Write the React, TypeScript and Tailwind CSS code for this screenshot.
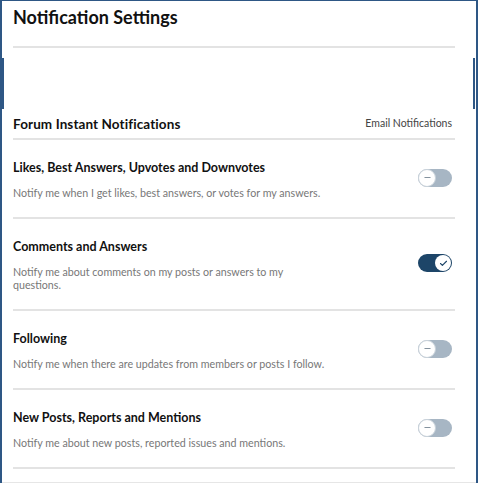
import { Check, Minus } from 'lucide-react';

const rows = [
  {
    title: 'Likes, Best Answers, Upvotes and Downvotes',
    desc: 'Notify me when I get likes, best answers, or votes for my answers.',
    on: false,
  },
  {
    title: 'Comments and Answers',
    desc: 'Notify me about comments on my posts or answers to my questions.',
    on: true,
  },
  {
    title: 'Following',
    desc: 'Notify me when there are updates from members or posts I follow.',
    on: false,
  },
  {
    title: 'New Posts, Reports and Mentions',
    desc: 'Notify me about new posts, reported issues and mentions.',
    on: false,
  },
];

function Toggle({ on }: { on: boolean }) {
  if (on) {
    return (
      <div className="w-[34px] h-[18px] rounded-full bg-[#1d4568] flex items-center justify-end pr-[1px]">
        <div className="w-[16px] h-[16px] rounded-full bg-white flex items-center justify-center">
          <Check className="w-[9px] h-[9px] text-[#1d4568]" strokeWidth={3} />
        </div>
      </div>
    );
  }
  return (
    <div className="w-[34px] h-[18px] rounded-full bg-[#a7b6c4] flex items-center">
      <div className="w-[18px] h-[18px] rounded-full bg-white border border-[#c9d2da] flex items-center justify-center">
        <Minus className="w-[9px] h-[9px] text-[#7d8c99]" strokeWidth={2.5} />
      </div>
    </div>
  );
}

export default function App() {
  return (
    <div
      className="relative w-[478px] h-[483px] bg-white border-t border-x-2 border-[#2e5785] overflow-hidden"
      style={{ fontFamily: 'Lato, "Noto Sans", sans-serif' }}
    >
      {/* thicker frame segments */}
      <div className="absolute left-0 top-[57px] h-[51px] w-[2px] bg-[#2e5785]" />
      <div className="absolute right-[1px] top-[57px] h-[51px] w-[2px] bg-[#2e5785]" />

      <div className="pl-[11px] pr-[21px]">
        <h1 className="pt-[4px] text-[18px] leading-[24px] font-bold text-[#111]">
          Notification Settings
        </h1>
        <div className="mt-[17px] h-[2px] bg-[#e3e3e3]" />

        <div className="mt-[66px] flex items-center justify-between pb-[4px]">
          <span className="text-[13.5px] font-bold text-[#111] tracking-[0.1px]">Forum Instant Notifications</span>
          <span className="text-[10.5px] text-[#444] pr-[3px]">Email Notifications</span>
        </div>
        <div className="h-[2px] bg-[#e3e3e3]" />

        {rows.map((r) => (
          <div key={r.title}>
            <div className="flex items-center justify-between pt-[20px] pb-[18px]">
              <div className="w-[316px] shrink-0">
                <div className="text-[12.5px] leading-[16px] font-bold text-[#111] whitespace-nowrap">{r.title}</div>
                <p className="mt-[10px] text-[10.7px] leading-[13px] text-[#777]">{r.desc}</p>
              </div>
              <div className="pb-[4px] pr-[3px]">
                <Toggle on={r.on} />
              </div>
            </div>
            <div className="h-[2px] bg-[#e3e3e3]" />
          </div>
        ))}
      </div>
      <div className="absolute left-0 right-0 bottom-0 h-[1px] bg-[#e6e6e6]" />
    </div>
  );
}
